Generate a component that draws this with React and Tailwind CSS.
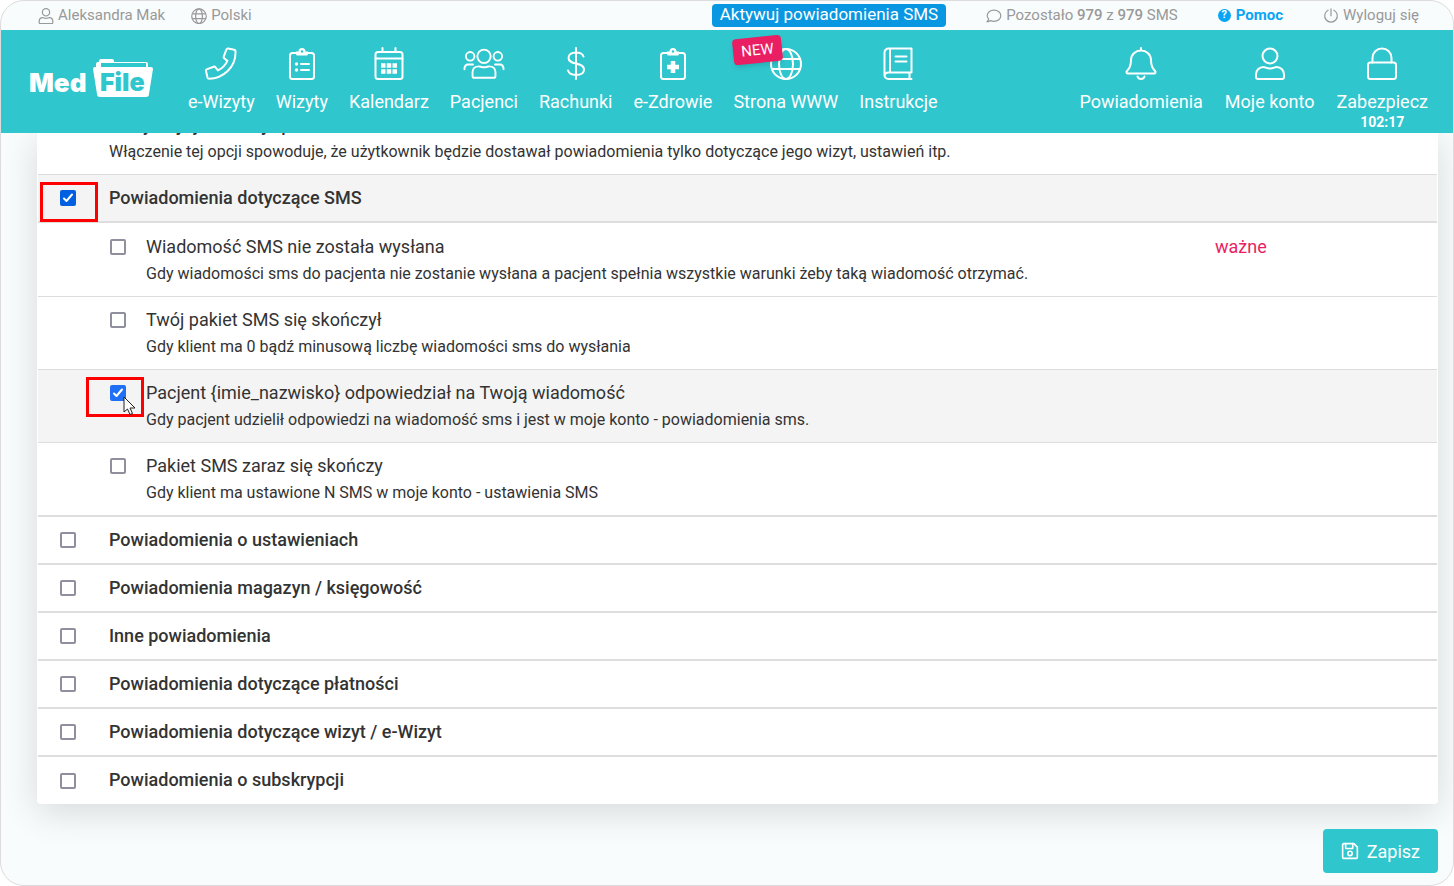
import { useState } from 'react';

const itemIcon = 'h-[33px] w-[42px]';

const Icon = ({ name, className }) => {
  const clipboard = (
    <>
      <path d="M10 6H6.500A2.500 2.500 0 0 0 4 8.500v21A2.500 2.500 0 0 0 6.500 32h19a2.500 2.500 0 0 0 2.500-2.500v-21A2.500 2.500 0 0 0 25.500 6H22" />
      <path d="M10 4.500h2.500a3.500 3.500 0 0 1 7 0H22V7a1.500 1.500 0 0 1-1.500 1.500h-9A1.500 1.500 0 0 1 10 7z" fill="currentColor" stroke="none" />
      <circle cx="16" cy="4.500" r="1.200" fill="#30c6ce" stroke="none" />
    </>
  );

  const paths = {
    phone: <path d="M29.300 2.700 23.100 1.600c-.7-.1-1.400.3-1.700 1l-2.700 7.100c-.2.6 0 1.200.5 1.600l3.200 2.600c-1.900 4.200-5.300 7.600-9.500 9.500l-2.600-3.200c-.4-.5-1-.7-1.600-.5L1.600 22.400c-.5.3-.8 1-.6 1.700l1.500 6.400c.2.700.7 1.200 1.500 1.200C18.500 31.700 30.500 20 30.500 5.800V4.200c0-.8-.5-1.400-1.200-1.500z" />,
    list: (
      <>
        {clipboard}
        <path d="M15 17h8M15 23h8" />
        <circle cx="10.500" cy="17" r="1.700" fill="currentColor" stroke="none" />
        <circle cx="10.500" cy="23" r="1.700" fill="currentColor" stroke="none" />
      </>
    ),
    calendar: (
      <>
        <rect x="2.500" y="5" width="27" height="27" rx="2.500" />
        <path d="M2.500 11.500h27M9.500 1v4M22.500 1v4" />
        <path d="M8 18.500h16M8 24.500h16" strokeWidth="4.500" strokeDasharray="4.500 1.250" strokeLinecap="butt" />
      </>
    ),
    dollar: <path d="M16 1v31M23.500 9.500C22.500 6.500 20 5.500 16 5.500c-5 0-7.500 2.500-7.500 5.500 0 7.500 15.500 3.500 15.500 11.500 0 3.500-3 5.500-8 5.500-4.500 0-7-1.500-8-4.500" />,
    health: (
      <>
        {clipboard}
        <path d="M16 14v12M10 20h12" strokeWidth="4.500" strokeLinecap="butt" />
      </>
    ),
    globe: (
      <>
        <circle cx="16" cy="17" r="15" />
        <ellipse cx="16" cy="17" rx="7" ry="15" />
        <path d="M2.500 12h27M2.500 22h27" />
      </>
    ),
    book: (
      <>
        <path d="M29.500 25.500V1.500H6.500a4 4 0 0 0-4 4V28a4 4 0 0 0 4 4h23M29.500 25.500H6.500a4 4 0 0 0-4 3M27.500 26v6M8 2v23" />
        <path d="M13.500 9.500h11M13.500 14.500h11" />
      </>
    ),
    bell: (
      <>
        <path d="M16 1v2.500M3 26.500c-1.500 0-2-1.500-1-2.500 2.500-2.500 4-5 4-11 0-5.500 4.500-9.500 10-9.500s10 4 10 9.500c0 6 1.500 8.500 4 11 1 1 .5 2.500-1 2.500z" />
        <path d="M12.500 29.500a3.700 3.700 0 0 0 7 0" />
      </>
    ),
    user: (
      <>
        <circle cx="16" cy="9" r="7.500" />
        <path d="M9.500 20c2 0 3 1.500 6.500 1.500s4.500-1.500 6.500-1.500c4.500 0 7.500 3.500 7.500 7.500V30a2 2 0 0 1-2 2H4a2 2 0 0 1-2-2v-2.500C2 23.500 5 20 9.500 20z" />
      </>
    ),
    lock: (
      <>
        <rect x="2" y="15.500" width="28" height="16.500" rx="2.500" />
        <path d="M6.500 15.500V11a9.500 9.500 0 0 1 19 0v4.500" />
      </>
    ),
    save: (
      <>
        <path d="M4.500 3H23l6.500 6.500V28a2 2 0 0 1-2 2h-23a2 2 0 0 1-2-2V5a2 2 0 0 1 2-2z" />
        <path d="M8 3v9h13V3" />
        <circle cx="16" cy="21" r="4" />
      </>
    ),
    comment: <path d="M16 4.500c8 0 14 5 14 11.500s-6 11.500-14 11.500c-2.500 0-5-.5-7-1.500-2 1.500-4.500 2.500-7.500 2.500 2-2 3-3.500 3.500-6C3 20.500 2 18.500 2 16 2 9.500 8 4.500 16 4.500z" />,
    power: <path d="M16 2v14M10 4.500a13 13 0 1 0 12 0" />,
  };

  return (
    <svg viewBox="0 0 32 33" fill="none" stroke="currentColor" strokeWidth="2" strokeLinejoin="round" strokeLinecap="round" className={className} aria-hidden="true">
      {paths[name]}
    </svg>
  );
};

const UsersIcon = () => (
  <svg viewBox="0 0 44 34" fill="none" stroke="currentColor" strokeWidth="2" strokeLinecap="round" strokeLinejoin="round" className={itemIcon} aria-hidden="true">
    <circle cx="22" cy="9.500" r="7" />
    <circle cx="7.500" cy="9.500" r="4.500" />
    <circle cx="36.500" cy="9.500" r="4.500" />
    <path d="M16.500 20c2 0 2.500 1 5.500 1s3.500-1 5.500-1c4 0 6.500 2.500 6.500 6V30a2 2 0 0 1-2 2H12a2 2 0 0 1-2-2v-4c0-3.500 2.500-6 6.500-6zM1.500 23c0-3 1.500-5 4-5h5M42.500 23c0-3-1.500-5-4-5h-5" />
  </svg>
);

const Logo = () => (
  <svg viewBox="0 0 124 42" className="h-[42px] w-[124px]" role="img" aria-label="MedFile">
    <path d="M67 11V6a2 2 0 0 1 2-2h1V3a2 2 0 0 1 2-2h11a2 2 0 0 1 2 2v1h32a2 2 0 0 1 2 2v5z" fill="#fff" />
    <path d="M72 5h45v4H72z" fill="#30c6ce" />
    <path d="M66 9h56a2 2 0 0 1 2 2l-4 25a3 3 0 0 1-3 3H71a3 3 0 0 1-3-3L64 11a2 2 0 0 1 2-2z" fill="#fff" />
    <text x="0" y="34" fill="#fff" className="font-[Inter] text-[26px] font-black">Med</text>
    <text x="71" y="33" fill="#30c6ce" className="font-[Inter] text-[25px] font-black">File</text>
  </svg>
);

const menu = [
  { icon: 'phone', label: 'e-Wizyty' },
  { icon: 'list', label: 'Wizyty' },
  { icon: 'calendar', label: 'Kalendarz' },
  { icon: 'users', label: 'Pacjenci' },
  { icon: 'dollar', label: 'Rachunki' },
  { icon: 'health', label: 'e-Zdrowie' },
  { icon: 'globe', label: 'Strona WWW', isNew: true },
  { icon: 'book', label: 'Instrukcje' },
];

const accountMenu = [
  { icon: 'bell', label: 'Powiadomienia' },
  { icon: 'user', label: 'Moje konto' },
  { icon: 'lock', label: 'Zabezpiecz', timer: '102:17' },
];

const smsItems = [
  {
    id: 'not-sent',
    title: 'Wiadomość SMS nie została wysłana',
    text: 'Gdy wiadomości sms do pacjenta nie zostanie wysłana a pacjent spełnia wszystkie warunki żeby taką wiadomość otrzymać.',
    important: true,
  },
  {
    id: 'package-ended',
    title: 'Twój pakiet SMS się skończył',
    text: 'Gdy klient ma 0 bądź minusową liczbę wiadomości sms do wysłania',
  },
  {
    id: 'patient-reply',
    title: 'Pacjent {imie_nazwisko} odpowiedział na Twoją wiadomość',
    text: 'Gdy pacjent udzielił odpowiedzi na wiadomość sms i jest w moje konto - powiadomienia sms.',
  },
  {
    id: 'package-ending',
    title: 'Pakiet SMS zaraz się skończy',
    text: 'Gdy klient ma ustawione N SMS w moje konto - ustawienia SMS',
  },
];

const sections = [
  { id: 'settings', title: 'Powiadomienia o ustawieniach' },
  { id: 'stock', title: 'Powiadomienia magazyn / księgowość' },
  { id: 'other', title: 'Inne powiadomienia' },
  { id: 'payments', title: 'Powiadomienia dotyczące płatności' },
  { id: 'visits', title: 'Powiadomienia dotyczące wizyt / e-Wizyt' },
  { id: 'subscription', title: 'Powiadomienia o subskrypcji' },
];

const MenuItem = ({ item }) => (
  <a href="#" className="relative flex flex-col items-center">
    {item.icon === 'users' ? <UsersIcon /> : <Icon name={item.icon} className={itemIcon} />}
    <span className="mt-[10px] text-[18px] leading-6">{item.label}</span>
    {item.timer && <span className="text-[14px] leading-4 font-bold">{item.timer}</span>}
    {item.isNew && (
      <span className="absolute -top-2.5 left-0 flex h-[26px] w-[49px] -rotate-6 items-center justify-center rounded bg-[#e91e63] text-[15px] shadow-md">
        NEW
      </span>
    )}
  </a>
);

const Checkbox = ({ id, checked, onChange, color = 'checked:border-[#0060df] checked:bg-[#0060df]' }) => (
  <span className="relative flex h-4 w-4 shrink-0">
    <input
      id={id}
      type="checkbox"
      checked={checked}
      onChange={onChange}
      className={`h-4 w-4 appearance-none rounded-[2px] border-2 border-[#8f8f9d] bg-white ${color}`}
    />
    {checked && (
      <svg viewBox="0 0 16 16" fill="none" stroke="#fff" strokeWidth="2" strokeLinecap="round" strokeLinejoin="round" className="pointer-events-none absolute inset-0">
        <path d="M4 8.500 6.500 11 12 4.500" />
      </svg>
    )}
  </span>
);

const Cursor = () => (
  <svg viewBox="0 0 13 20" className="pointer-events-none absolute top-[11px] left-[13px] h-5 w-[13px]" aria-hidden="true">
    <path d="M1 1v15l3.500-3 2.500 5.500 2.500-1-2.500-5.500H12z" fill="#fff" stroke="#222" />
  </svg>
);

const Marker = ({ className }) => (
  <span className={`pointer-events-none absolute -top-2 h-10 w-[58px] border-3 border-[#f00] ${className}`} />
);

const App = () => {
  const [selected, setSelected] = useState(['sms', 'patient-reply']);

  const toggle = (id) => {
    setSelected(selected.includes(id) ? selected.filter((s) => s !== id) : [...selected, id]);
  };

  return (
    <div className="flex min-h-screen flex-col overflow-hidden rounded-3xl border border-[#dcdcde] bg-[#f8fcfd] font-[Roboto,sans-serif] text-[#333]">
      <div className="flex h-[29px] items-center pr-[34px] pl-[37px] text-[15px] text-[#999]">
        <a href="#" className="flex items-center gap-1">
          <Icon name="user" className="h-4 w-4 stroke-[2.5]" />
          Aleksandra Mak
        </a>
        <a href="#" className="ml-[26px] flex items-center gap-1">
          <Icon name="globe" className="h-4 w-4 stroke-[2.5]" />
          Polski
        </a>
        <a href="#" className="ml-auto flex h-[23px] items-center rounded bg-[#0897e0] px-2 pb-px text-[17px] text-white">
          Aktywuj powiadomienia SMS
        </a>
        <span className="ml-10 flex items-center gap-1">
          <Icon name="comment" className="h-4 w-4 stroke-[2.5]" />
          <span>Pozostało <b className="font-medium">979</b> z <b className="font-medium">979</b> SMS</span>
        </span>
        <a href="#" className="ml-10 flex items-center gap-[5px] font-bold text-[#08a5f4]">
          <span className="flex h-[13px] w-[13px] items-center justify-center rounded-full bg-[#08a5f4] text-[11px] text-white">?</span>
          Pomoc
        </a>
        <a href="#" className="ml-10 flex items-center gap-1">
          <Icon name="power" className="h-4 w-4 stroke-[2.5]" />
          Wyloguj się
        </a>
      </div>

      <header className="relative z-10 flex h-[103px] items-start bg-[#30c6ce] pt-[17px] pr-[25px] pl-7 text-white">
        <a href="#" className="mt-[11px]">
          <Logo />
        </a>
        <nav className="ml-[35px] flex gap-[21px]">
          {menu.map((item) => (
            <MenuItem key={item.label} item={item} />
          ))}
        </nav>
        <nav className="ml-auto flex gap-[22px]">
          {accountMenu.map((item) => (
            <MenuItem key={item.label} item={item} />
          ))}
        </nav>
      </header>

      <main className="flex flex-1 flex-col pr-[15px] pb-3 pl-9">
        <div className="rounded-b bg-white px-px shadow-[0_8px_36px_rgba(0,0,0,0.14)]">
          <div className="-mt-5 border-b border-[#ddd] pb-2.5 pl-[71px]">
            <h2 className="text-[18px] leading-6 font-medium">Otrzymuj tylko swoje powiadomienia</h2>
            <p className="mt-[3px] text-[16px] leading-6">
              Włączenie tej opcji spowoduje, że użytkownik będzie dostawał powiadomienia tylko dotyczące jego wizyt, ustawień itp.
            </p>
          </div>

          <div className="flex h-12 items-center border-b-2 border-[#ddd] bg-[#f4f4f4] pl-[22px]">
            <span className="relative h-4">
              <Checkbox id="sms" checked={selected.includes('sms')} onChange={() => toggle('sms')} />
              <Marker className="-left-5" />
            </span>
            <label htmlFor="sms" className="pb-0.5 pl-[33px] text-[18px] font-medium">Powiadomienia dotyczące SMS</label>
          </div>

          <div className="border-b-2 border-[#ddd] pt-px">
            {smsItems.map((item) => (
              <div key={item.id} className="flex border-b border-[#ddd] pt-[11px] pb-2.5 pl-[72px] last:border-b-0 has-checked:bg-[#f4f4f4]">
                <span className="relative mt-1 h-4">
                  <Checkbox
                    id={item.id}
                    checked={selected.includes(item.id)}
                    onChange={() => toggle(item.id)}
                    color="checked:border-[#2070f5] checked:bg-[#2070f5]"
                  />
                  {item.id === 'patient-reply' && (
                    <>
                      <Marker className="-left-6" />
                      <Cursor />
                    </>
                  )}
                </span>
                <label htmlFor={item.id} className="flex-1 pl-5">
                  <span className="block text-[18px] leading-6">{item.title}</span>
                  <span className="mt-[3px] block text-[16px] leading-6">{item.text}</span>
                </label>
                {item.important && <span className="w-[222px] text-[18px] leading-6 text-[#e91e63]">ważne</span>}
              </div>
            ))}
          </div>

          {sections.map((section) => (
            <div key={section.id} className="flex h-12 items-center border-b-2 border-[#ddd] pl-[22px] last:h-[47px] last:border-b-0">
              <Checkbox id={section.id} checked={selected.includes(section.id)} onChange={() => toggle(section.id)} />
              <label htmlFor={section.id} className="pb-0.5 pl-[33px] text-[18px] font-medium">{section.title}</label>
            </div>
          ))}
        </div>

        <button className="mt-[25px] flex h-11 items-center gap-2 self-end rounded bg-[#30c6ce] px-[18px] text-[18px] text-white">
          <Icon name="save" className="h-[18px] w-[18px] stroke-3" />
          Zapisz
        </button>
      </main>
    </div>
  );
};

export default App;
